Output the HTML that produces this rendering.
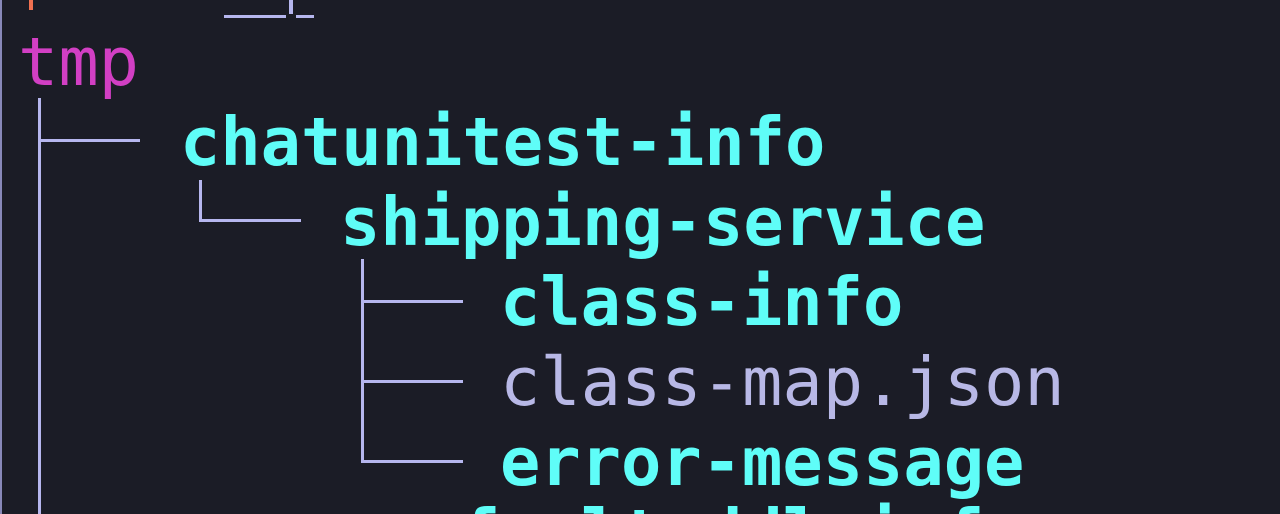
<!DOCTYPE html>
<html><head><style>
html,body{margin:0;padding:0;width:1280px;height:514px;overflow:hidden}
body{background:#1b1c26;position:relative;font-family:"DejaVu Sans Mono","Liberation Mono",monospace;font-size:67px;line-height:80px}
.t{position:absolute;white-space:pre;height:80px}
.c{color:#5ffdf8;font-weight:bold}
.f{color:#b8b8e6}
.l{position:absolute;background:#b6b6ee}
</style></head><body>
<div class="l" style="left:0;top:0;width:2px;height:514px;background:#8888b8"></div>
<div class="l" style="left:29px;top:0;width:4px;height:10px;background:#f07050"></div>
<div class="l" style="left:224px;top:15px;width:62px;height:3px"></div>
<div class="l" style="left:289px;top:0;width:4px;height:14px"></div>
<div class="l" style="left:296px;top:15px;width:18px;height:3px"></div>

<div class="t" style="left:18px;top:22px;color:#d23fc4">tmp</div>

<div class="l" style="left:38px;top:98px;width:3px;height:416px"></div>
<div class="l" style="left:38px;top:139px;width:102px;height:3px"></div>
<div class="t c" style="left:180px;top:102px">chatunitest-info</div>

<div class="l" style="left:199px;top:180px;width:3px;height:42px"></div>
<div class="l" style="left:199px;top:219px;width:102px;height:3px"></div>
<div class="t c" style="left:340px;top:182px">shipping-service</div>

<div class="l" style="left:361px;top:259px;width:3px;height:203px"></div>
<div class="l" style="left:361px;top:300px;width:102px;height:3px"></div>
<div class="t c" style="left:500px;top:262px">class-info</div>

<div class="l" style="left:361px;top:380px;width:102px;height:3px"></div>
<div class="t f" style="left:500px;top:342px">class-map.json</div>

<div class="l" style="left:361px;top:460px;width:102px;height:3px"></div>
<div class="t c" style="left:500px;top:422px">error-message</div>

<div style="position:absolute;left:0;top:494px;width:1280px;height:20px;overflow:hidden">
<div class="t c" style="left:460px;top:0">fault-ddl-info</div>
</div>
</body></html>
